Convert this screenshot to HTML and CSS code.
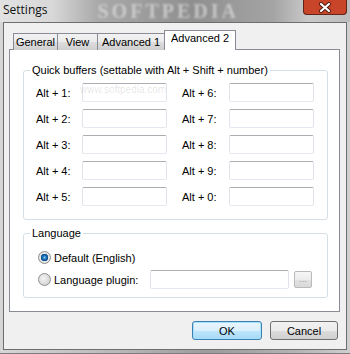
FILE: index.html
```html
<!DOCTYPE html>
<html>
<head>
  <title>Settings</title>
  <link rel="stylesheet" href="styles.css">
</head>
<body>
  <div class="window">
    <div class="titlebar">
      <span class="title">Settings</span>
      <span class="watermark">SOFTPEDIA</span>
      <span class="close">
        <svg width="14" height="11" viewBox="0 0 14 11">
          <path d="M3 2 L11 9 M11 2 L3 9" stroke="#4a1a12" stroke-width="4" stroke-linecap="round"/>
          <path d="M3 2 L11 9 M11 2 L3 9" stroke="#ffffff" stroke-width="2.2" stroke-linecap="round"/>
        </svg>
      </span>
    </div>

    <div class="client">
      <div class="tabs">
        <div class="tab tab-general">General</div>
        <div class="tab tab-view">View</div>
        <div class="tab tab-adv1">Advanced 1</div>
        <div class="tab tab-adv2 active">Advanced 2</div>
      </div>

      <div class="panel">
        <span class="site-mark">www.softpedia.com</span>

        <fieldset class="group">
          <legend>Quick buffers (settable with Alt + Shift + number)</legend>
          <div class="buffers">
            <label class="key">Alt + 1:</label><input type="text" class="field">
            <label class="key key-right">Alt + 6:</label><input type="text" class="field">
            <label class="key">Alt + 2:</label><input type="text" class="field">
            <label class="key key-right">Alt + 7:</label><input type="text" class="field">
            <label class="key">Alt + 3:</label><input type="text" class="field">
            <label class="key key-right">Alt + 8:</label><input type="text" class="field">
            <label class="key">Alt + 4:</label><input type="text" class="field">
            <label class="key key-right">Alt + 9:</label><input type="text" class="field">
            <label class="key">Alt + 5:</label><input type="text" class="field">
            <label class="key key-right">Alt + 0:</label><input type="text" class="field">
          </div>
        </fieldset>

        <fieldset class="group group-lang">
          <legend>Language</legend>
          <div class="lang">
            <div class="lang-row">
              <input type="radio" name="lang" class="radio" checked>
              <span>Default (English)</span>
            </div>
            <div class="lang-row">
              <input type="radio" name="lang" class="radio">
              <span class="plugin-label">Language plugin:</span>
              <input type="text" class="field plugin-field">
              <button type="button" class="browse">...</button>
            </div>
          </div>
        </fieldset>
      </div>

      <div class="buttons">
        <button type="button" class="btn btn-default">OK</button>
        <button type="button" class="btn">Cancel</button>
      </div>
    </div>
  </div>
</body>
</html>
```

FILE: styles.css
```css
body {
  margin: 0;
  padding: 0;
  font-family: "Liberation Sans", Arial, sans-serif;
  font-size: 11px;
  color: #000000;
  background-color: #c4c4c4;
}

.window {
  width: 350px;
  height: 354px;
  box-sizing: border-box;
  padding: 0 3px 3px 3px;
  display: flex;
  flex-direction: column;
  background: linear-gradient(to right, #d6d6d6, #bcbcbc 30%, #9c9c9c 60%, #b4b4b4 85%, #cfcfcf);
  border-bottom: 1px solid #7c7c7c;
}

/* title bar */
.titlebar {
  height: 22px;
  display: flex;
  align-items: flex-start;
  margin: 0 -3px;
  padding: 0 3px;
  background: linear-gradient(to right, #e2e2e2 0%, #d8d8d8 15%, #a9a9a9 28%, #8f8f8f 55%, #a4a4a4 78%, #c9c9c9 88%, #bdbdbd 100%);
}

.title {
  font-family: "Open Sans", "Liberation Sans", sans-serif;
  font-size: 12px;
  line-height: 20px;
  color: #111111;
}

.watermark {
  margin-left: 50px;
  font-family: "Liberation Serif", serif;
  font-weight: bold;
  font-size: 20px;
  line-height: 22px;
  letter-spacing: 3px;
  color: rgba(232, 232, 232, 0.6);
  filter: blur(1px);
}

.close {
  flex: 0 0 44px;
  height: 15px;
  margin-left: auto;
  box-sizing: border-box;
  border: 1px solid #5e2418;
  border-top: none;
  border-radius: 0 0 4px 4px;
  background: #c9452a;
  display: flex;
  align-items: center;
  justify-content: center;
}

/* client area */
.client {
  flex: 1;
  display: flex;
  flex-direction: column;
  background-color: #f0f0f0;
  border: 1px solid #6e6e6e;
  padding: 8px 6px 9px 5px;
}

.tabs {
  display: flex;
  align-items: flex-end;
  height: 19px;
  margin-left: 4px;
  margin-bottom: -1px;
  position: relative;
  z-index: 1;
}

.tab {
  height: 17px;
  box-sizing: border-box;
  border: 1px solid #898c95;
  border-bottom: none;
  margin-left: -1px;
  padding: 2px 0 0 0;
  text-align: center;
  background: linear-gradient(#f2f2f2, #ebebeb 50%, #dddddd 51%, #cfcfcf);
}

.tab:first-child {
  margin-left: 0;
}

.tab-general { width: 45px; }
.tab-view { width: 41px; }
.tab-adv1 { width: 68px; }
.tab-adv2 { width: 72px; }

.tab.active {
  height: 20px;
  padding-top: 1px;
  background: #ffffff;
}

.panel {
  flex: 1;
  position: relative;
  background-color: #ffffff;
  border: 1px solid #898c95;
  padding: 14px 11px 0 13px;
}

.site-mark {
  position: absolute;
  left: 70px;
  top: 34px;
  font-size: 10px;
  color: rgba(0, 0, 0, 0.12);
}

/* group boxes */
.group {
  margin: 0;
  padding: 0;
  min-width: 0;
  border: 1px solid #d5dfe5;
  border-radius: 3px;
}

.group legend {
  margin-left: 6px;
  padding: 0 2px;
  line-height: 13px;
}

.group-lang {
  margin-top: 7px;
}

.buffers {
  display: grid;
  grid-template-columns: 46px 85px 62px 85px;
  grid-auto-rows: 19px;
  row-gap: 7px;
  padding: 6px 13px 13px 12px;
  align-items: center;
}

.key-right {
  padding-left: 15px;
}

.field {
  box-sizing: border-box;
  width: 85px;
  height: 19px;
  margin: 0;
  padding: 0 3px;
  border: 1px solid #e2e3ea;
  border-top-color: #abadb3;
  border-bottom-color: #e3e9ef;
  border-radius: 2px;
  background-color: #ffffff;
  font-family: inherit;
  font-size: 11px;
}

/* language */
.lang {
  padding: 8px 0 8px 14px;
  display: flex;
  flex-direction: column;
  gap: 3px;
}

.lang-row {
  height: 19px;
  display: flex;
  align-items: center;
}

.radio {
  appearance: none;
  -webkit-appearance: none;
  width: 13px;
  height: 13px;
  margin: 0 3px 0 0;
  border: 1px solid #8f8f8f;
  border-radius: 50%;
  background: radial-gradient(circle at 40% 40%, #f4f4f4, #d6d6d6 70%, #c4c4c4);
  box-sizing: border-box;
}

.radio:checked {
  background: radial-gradient(circle, #7fc3f2 0, #1a6fb5 2px, #0d4b87 3.5px, #e8e8e8 4px, #d2d2d2 100%);
}

.plugin-label {
  width: 96px;
}

.plugin-field {
  width: 139px;
}

.browse {
  width: 18px;
  height: 17px;
  margin-left: 5px;
  padding: 0;
  border: 1px solid #b9b9b9;
  border-radius: 2px;
  background: linear-gradient(#f6f6f6, #ececec 50%, #e2e2e2 51%, #d9d9d9);
  color: #9a9a9a;
  font-family: inherit;
  font-size: 9px;
  line-height: 11px;
}

/* dialog buttons */
.buttons {
  display: flex;
  justify-content: flex-end;
  gap: 8px;
  margin-top: 9px;
  padding-right: 2px;
}

.btn {
  width: 68px;
  height: 19px;
  padding: 0;
  border: 1px solid #707070;
  border-radius: 3px;
  background: linear-gradient(#f2f2f2, #ebebeb 50%, #dddddd 51%, #cfcfcf);
  font-family: inherit;
  font-size: 11px;
  color: #000000;
}

.btn-default {
  width: 70px;
  border-color: #3c7fb1;
  box-shadow: inset 0 0 0 1px #a6e1fb;
  background: linear-gradient(#eaf6fd, #d9f0fc 50%, #bee6fd 51%, #a7d9f5);
}
```
